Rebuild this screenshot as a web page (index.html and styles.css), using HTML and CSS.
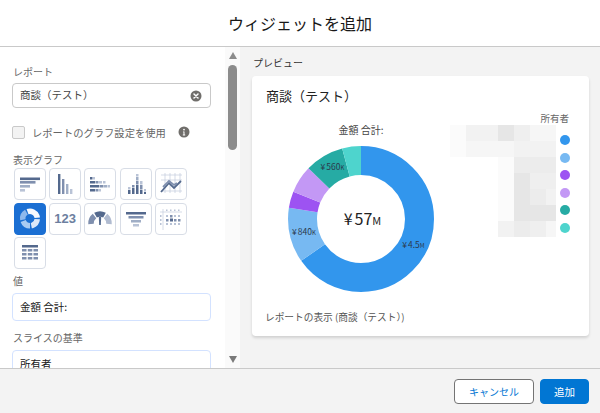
FILE: index.html
```html
<!DOCTYPE html>
<html lang="ja">
<head>
<meta charset="utf-8">
<title>ウィジェットを追加</title>
<link rel="stylesheet" href="styles.css">
</head>
<body>
<div class="modal">
  <header class="head"><h1 class="head-title">ウィジェットを追加</h1></header>
  <main class="body">
    <section class="form-pane">
      <div class="form">
        <div class="field-label first">レポート</div>
        <div class="input input-report">
          <span>商談（テスト）</span>
          <svg class="clear" viewBox="0 0 12 12"><circle cx="6" cy="6" r="5.5" fill="#706e6b"/><path d="M4 4l4 4M8 4l-4 4" stroke="#fff" stroke-width="1.5" stroke-linecap="round"/></svg>
        </div>
        <div class="check-row">
          <span class="checkbox"></span>
          <span class="check-label">レポートのグラフ設定を使用</span>
          <svg class="info" viewBox="0 0 12 12"><circle cx="6" cy="6" r="5.5" fill="#706e6b"/><circle cx="6" cy="3.6" r="0.9" fill="#fff"/><path d="M5 5.4h1.5v3.2h.7v.8H4.8v-.8h.7V6.2H5z" fill="#fff"/></svg>
        </div>
        <div class="field-label graph-label">表示グラフ</div>
        <div class="chart-types">
          <div class="ct"><svg viewBox="0 0 32 32"><rect class="d" x="6" y="9.5" width="20" height="2.6"/><rect class="m" x="6" y="13" width="15.5" height="2.6"/><rect class="n" x="6" y="17" width="10" height="2.6"/><rect class="l" x="6" y="21" width="5" height="2.6"/></svg></div>
          <div class="ct"><svg viewBox="0 0 32 32"><rect class="d" x="9" y="6" width="2.4" height="20"/><rect class="m" x="13" y="11" width="2.4" height="15"/><rect class="n" x="17" y="16" width="2.4" height="10"/><rect class="l" x="21" y="21" width="2.4" height="5"/></svg></div>
          <div class="ct"><svg viewBox="0 0 32 32"><rect class="d" x="6" y="9" width="2.5" height="2.5"/><rect class="l" x="9" y="9" width="2" height="2.5"/><rect class="d" x="6" y="13" width="5" height="2.5"/><rect class="m" x="11.5" y="13" width="3" height="2.5"/><rect class="l" x="15" y="13" width="3" height="2.5"/><rect class="l" x="19" y="13" width="2.5" height="2.5"/><rect class="d" x="6" y="17" width="9" height="2.5"/><rect class="m" x="15.5" y="17" width="4" height="2.5"/><rect class="n" x="20" y="17" width="3" height="2.5"/><rect class="l" x="23.5" y="17" width="2.5" height="2.5"/><rect class="d" x="6" y="21" width="5" height="2.5"/><rect class="m" x="11.5" y="21" width="3" height="2.5"/><rect class="l" x="15" y="21" width="2" height="2.5"/></svg></div>
          <div class="ct"><svg viewBox="0 0 32 32"><rect class="d" x="8" y="22" width="2.5" height="4"/><rect class="l" x="8" y="19" width="2.5" height="2.5"/><rect class="d" x="12" y="20" width="2.5" height="6"/><rect class="m" x="12" y="17" width="2.5" height="2.5"/><rect class="d" x="16" y="17" width="2.5" height="9"/><rect class="m" x="16" y="13" width="2.5" height="3.5"/><rect class="n" x="16" y="9" width="2.5" height="3.5"/><rect class="l" x="16" y="6" width="2.5" height="2.5"/><rect class="d" x="20" y="22" width="2.5" height="4"/><rect class="m" x="20" y="17" width="2.5" height="4.5"/><rect class="l" x="20" y="13" width="2.5" height="3.5"/><rect class="d" x="24" y="24" width="2" height="2"/><rect class="l" x="24" y="21" width="2" height="2.5"/></svg></div>
          <div class="ct"><svg viewBox="0 0 32 32"><path class="grid" d="M6 7h21M6 12h21M6 23h21M10 5v20M15 5v20M20 5v20M25 5v20"/><path class="line" d="M6 24l8-9 5 5 7-7"/><path class="line2" d="M8 19l6-6 5 4 3-2"/></svg></div>
          <div class="ct ct-on"><svg viewBox="0 0 32 32"><g class="donut" transform="rotate(-110 16 15.5)"><circle stroke="#f6f9fe" cx="16" cy="15.5" r="7.250" pathLength="360" stroke-dasharray="105 360"/><circle stroke="#dbe8f9" cx="16" cy="15.5" r="7.250" pathLength="360" stroke-dasharray="75 360" stroke-dashoffset="-115"/><circle stroke="#a9cbf2" cx="16" cy="15.5" r="7.250" pathLength="360" stroke-dasharray="70 360" stroke-dashoffset="-200"/><circle stroke="#8fb9ec" cx="16" cy="15.5" r="7.250" pathLength="360" stroke-dasharray="70 360" stroke-dashoffset="-280"/></g></svg></div>
          <div class="ct ct-num">123</div>
          <div class="ct"><svg viewBox="0 0 32 32"><g fill="none" stroke-width="5.500"><path class="sm" d="M7 21a9.500 9.500 0 0 1 3.500-8"/><path class="sd" d="M11.500 12.200a9.500 9.500 0 0 1 9 0"/><path class="sl" d="M21.500 13a9.500 9.500 0 0 1 3.500 8"/></g><path class="d" d="M14.800 14h2.400l-.4 8h-1.600z"/></svg></div>
          <div class="ct"><svg viewBox="0 0 32 32"><rect class="d" x="6" y="9" width="20" height="2.5"/><rect class="m" x="8.500" y="13" width="15" height="2.500"/><rect class="n" x="11" y="17" width="10" height="2.500"/><rect class="l" x="13" y="21" width="6" height="2.500"/></svg></div>
          <div class="ct"><svg viewBox="0 0 32 32"><path class="grid" d="M8 6v21M5 9h22"/><g class="l"><rect x="11" y="6.500" width="1.500" height="1.500"/><rect x="15" y="6.500" width="1.500" height="1.500"/><rect x="19" y="6.500" width="1.500" height="1.500"/><rect x="23" y="6.500" width="1.500" height="1.500"/><rect x="11" y="12" width="2" height="2"/><rect x="19" y="12" width="2" height="2"/><rect x="23" y="12" width="2" height="2"/><rect x="11" y="20" width="2" height="2"/><rect x="15" y="20" width="2" height="2"/><rect x="19" y="20" width="2" height="2"/><rect x="23" y="20" width="2" height="2"/><rect x="5" y="12" width="1.500" height="2"/><rect x="5" y="16" width="1.500" height="2"/><rect x="5" y="20" width="1.500" height="2"/></g><g class="m"><rect x="15" y="12" width="2.500" height="2.500"/><rect x="11" y="16" width="2.500" height="2.500"/><rect x="19" y="16" width="2.500" height="2.500"/><rect x="23" y="16" width="2.500" height="2.500"/></g><rect class="d" x="15" y="15.500" width="3" height="3"/></svg></div>
          <div class="ct"><svg viewBox="0 0 32 32"><rect class="d" x="8" y="8" width="16" height="2.500"/><g class="m"><rect x="8" y="12" width="4.500" height="2.500"/><rect x="13.800" y="12" width="4.500" height="2.500"/><rect x="19.500" y="12" width="4.500" height="2.500"/><rect x="8" y="16" width="4.500" height="2.500"/><rect x="13.800" y="16" width="4.500" height="2.500"/><rect x="19.500" y="16" width="4.500" height="2.500"/><rect x="8" y="20" width="4.500" height="2.500"/><rect x="13.800" y="20" width="4.500" height="2.500"/><rect x="19.500" y="20" width="4.500" height="2.500"/></g></svg></div>
        </div>
        <div class="field-label value-label">値</div>
        <div class="input input-soft"><span class="nudge">金額 合計:</span></div>
        <div class="field-label slice-label">スライスの基準</div>
        <div class="input input-soft input-clipped"><span class="nudge">所有者</span></div>
      </div>
      <div class="scrollbar">
        <span class="arrow arrow-up"></span>
        <span class="thumb"></span>
        <span class="arrow arrow-down"></span>
      </div>
    </section>
    <section class="preview-pane">
      <div class="preview-label">プレビュー</div>
      <article class="card">
        <h2 class="card-title">商談（テスト）</h2>
        <div class="chart-row">
          <div class="pie-col">
            <div class="pie-title">金額 合計:</div>
            <svg class="pie" viewBox="0 0 150 150">
              <g class="rings" transform="rotate(-90 75 75)">
                <circle class="s1" cx="75" cy="75" r="58.500" pathLength="360" stroke-dasharray="235 360"/>
                <circle class="s2" cx="75" cy="75" r="58.500" pathLength="360" stroke-dasharray="44 360" stroke-dashoffset="-235"/>
                <circle class="s3" cx="75" cy="75" r="58.500" pathLength="360" stroke-dasharray="13 360" stroke-dashoffset="-279"/>
                <circle class="s4" cx="75" cy="75" r="58.500" pathLength="360" stroke-dasharray="22 360" stroke-dashoffset="-292"/>
                <circle class="s5" cx="75" cy="75" r="58.500" pathLength="360" stroke-dasharray="31 360" stroke-dashoffset="-314"/>
                <circle class="s6" cx="75" cy="75" r="58.500" pathLength="360" stroke-dasharray="15 360" stroke-dashoffset="-345"/>
              </g>
              <text class="pie-val" x="18" y="91" text-anchor="middle">¥<tspan dx="1">840</tspan><tspan class="u">K</tspan></text>
              <text class="pie-val" x="127.500" y="104" text-anchor="middle">¥<tspan dx="1">4.5</tspan><tspan class="u">M</tspan></text>
              <text class="pie-val" x="46.500" y="26" text-anchor="middle">¥<tspan dx="1">560</tspan><tspan class="u">K</tspan></text>
              <text class="pie-total" x="76.500" y="81" text-anchor="middle">¥<tspan dx="2">57</tspan><tspan class="pie-total-u">M</tspan></text>
            </svg>
          </div>
          <div class="legend">
            <div class="legend-title">所有者</div>
            <div class="legend-body">
              <div class="mosaic">
                <i class="a"></i><i class="c"></i><i class="c"></i><i class="f"></i><i class="h"></i><i class="b"></i><i class="b"></i>
                <i class="a"></i><i class="b"></i><i class="b"></i><i class="b"></i><i class="c"></i><i class="c"></i><i class="c"></i>
                <i></i><i></i><i></i><i class="a"></i><i class="e"></i><i class="e"></i><i class="e"></i>
                <i></i><i></i><i></i><i class="a"></i><i class="f"></i><i class="h"></i><i class="h"></i>
                <i></i><i></i><i></i><i class="a"></i><i class="f"></i><i class="e"></i><i class="c"></i>
                <i></i><i></i><i></i><i class="a"></i><i class="f"></i><i class="f"></i><i class="f"></i>
                <i></i><i></i><i></i><i class="c"></i><i class="e"></i><i class="h"></i><i class="b"></i>
              </div>
              <div class="dots">
                <span class="dot d1"></span><span class="dot d2"></span><span class="dot d3"></span><span class="dot d4"></span><span class="dot d5"></span><span class="dot d6"></span>
              </div>
            </div>
          </div>
        </div>
        <div class="card-link">レポートの表示 (商談（テスト）)</div>
      </article>
    </section>
  </main>
  <footer class="foot">
    <button class="btn btn-cancel">キャンセル</button>
    <button class="btn btn-add">追加</button>
  </footer>
</div>
</body>
</html>
```
FILE: styles.css
```css
* { box-sizing: border-box; }
html, body { margin: 0; height: 100%; }
body {
  font-family: "Noto Sans CJK JP", "Liberation Sans", sans-serif;
  color: #181818;
  background: #fff;
  overflow: hidden;
}
.modal { width: 600px; height: 413px; display: flex; flex-direction: column; }
.head {
  height: 47px;
  border-bottom: 1px solid #c9c9c9;
  display: flex;
  align-items: center;
  justify-content: center;
}
.head-title { margin: 0; font-size: 16px; font-weight: 400; line-height: 20px; }
.body { flex: 1; min-height: 0; display: flex; }
.form-pane { width: 240px; display: flex; background: #fff; overflow: hidden; }
.form { width: 225px; padding: 0 14px 0 12px; overflow: hidden; flex: none; }
.field-label { font-size: 10px; line-height: 14px; color: #666; padding-left: 1px; }
.first { margin-top: 18px; }
.input {
  height: 25px;
  border: 1px solid #c9c9c9;
  border-radius: 4px;
  margin-top: 3px;
  padding: 0 7px;
  display: flex;
  align-items: center;
  font-size: 10.500px;
  color: #444;
}
.input-report { justify-content: space-between; margin-top: 4px; padding-right: 8px; }
.input-report span { margin-bottom: 2px; }
.nudge { margin-bottom: 1px; }
.clear, .info { width: 12px; height: 12px; display: block; flex: none; }
.check-row { display: flex; align-items: center; margin-top: 17px; height: 14px; }
.checkbox { width: 13px; height: 13px; background: #f3f3f3; border: 1px solid #c9c9c9; border-radius: 2px; }
.check-label { font-size: 10.300px; margin-left: 7px; color: #666; }
.info { margin-left: 12px; }
.graph-label { margin-top: 14px; }
.chart-types {
  display: grid;
  grid-template-columns: repeat(5, 32px);
  column-gap: 3.200px;
  row-gap: 2.500px;
  margin: 1px 0 0 2px;
}
.ct {
  width: 32px;
  height: 32px;
  border: 1px solid #d8dde6;
  border-radius: 4px;
  background: #fff;
  position: relative;
  display: flex;
  align-items: center;
  justify-content: center;
}
.ct svg { position: absolute; left: -1px; top: -1px; width: 32px; height: 32px; display: block; }
.ct-on { background: #1b6fd3; border-color: #1b6fd3; }
.donut circle { fill: none; stroke-width: 5.500; }
.ct-num { font-family: "Liberation Sans", sans-serif; font-size: 13px; font-weight: 700; color: #6d7f9f; }
.d { fill: #54698d; }
.m { fill: #7f8fae; }
.n { fill: #a0aec6; }
.l { fill: #b9c3d6; }
.sd { stroke: #54698d; }
.sm { stroke: #7f8fae; }
.sl { stroke: #b0bbd0; }
.grid { stroke: #c3ccdc; stroke-width: 0.7; fill: none; }
.line { stroke: #54698d; stroke-width: 1.8; fill: none; }
.line2 { stroke: #7f8fae; stroke-width: 1.8; fill: none; }
.value-label { margin-top: 5px; }
.input-soft { height: 28px; border-color: #d3e2ff; color: #181818; margin-top: 5px; }
.input-clipped { height: 40px; padding-bottom: 12px; }
.slice-label { margin-top: 10px; }
.scrollbar { width: 15px; background: #fafafa; display: flex; flex-direction: column; align-items: center; position: relative; }
.arrow { width: 0; height: 0; border-left: 4.500px solid transparent; border-right: 4.500px solid transparent; }
.arrow-up { border-bottom: 7px solid #8c8c8c; margin-top: 5px; }
.thumb { width: 9px; height: 85px; border-radius: 5px; background: #8c8c8c; margin-top: 6px; }
.arrow-down { border-top: 7px solid #7a7a7a; margin-top: auto; margin-bottom: 5px; }
.preview-pane { flex: 1; min-width: 0; background: #f3f3f3; padding: 9px 11px 0 12px; }
.preview-label { font-size: 10px; line-height: 14px; color: #333; margin-left: 1px; }
.card {
  margin-top: 6px;
  height: 260px;
  background: #fff;
  border-radius: 4px;
  box-shadow: 0 2px 3px rgba(0,0,0,.14);
  padding: 10px 0 0 13px;
  display: flex;
  flex-direction: column;
}
.card-title { margin: 0; padding-left: 1px; font-size: 13px; font-weight: 400; line-height: 20px; color: #222; }
.chart-row { display: flex; height: 203px; }
.pie-col { width: 192px; display: flex; flex-direction: column; align-items: center; padding-top: 17px; flex: none; }
.pie-title { font-size: 10px; line-height: 14px; color: #444; }
.pie { width: 150px; height: 150px; margin-top: 7px; display: block; flex: none; }
.rings circle { fill: none; stroke-width: 29; }
.s1 { stroke: #3296ed; }
.s2 { stroke: #77b9f2; }
.s3 { stroke: #9d53f2; }
.s4 { stroke: #c398f5; }
.s5 { stroke: #26aba4; }
.s6 { stroke: #4ed4cd; }
.pie-val { font-size: 8.500px; fill: #2b3a4d; }
.u { font-size: 6px; }
.pie-total { font-size: 16px; fill: #222; }
.pie-total-u { font-size: 11px; }
.legend { width: 122px; margin-left: -7px; flex: none; padding-top: 5px; }
.legend-title { font-size: 9.500px; line-height: 14px; color: #666; text-align: right; width: 119px; }
.legend-body { display: flex; }
.mosaic { display: grid; grid-template-columns: repeat(6, 16px) 10px; grid-auto-rows: 16px; flex: none; }
.a { background: #fbfbfb; }
.b { background: #f6f6f6; }
.c { background: #f2f2f2; }
.h { background: #efefef; }
.e { background: #ececec; }
.f { background: #e6e6e6; }
.dots { display: flex; flex-direction: column; gap: 7.600px; margin: 10px 0 0 4px; }
.dot { width: 10px; height: 10px; border-radius: 50%; display: block; }
.d1 { background: #3296ed; }
.d2 { background: #77b9f2; }
.d3 { background: #9d53f2; }
.d4 { background: #c398f5; }
.d5 { background: #26aba4; }
.d6 { background: #4ed4cd; }
.card-link { font-size: 9.700px; line-height: 14px; color: #555; margin-top: 1px; }
.foot {
  height: 45px;
  background: #f3f3f3;
  border-top: 1px solid #c9c9c9;
  display: flex;
  justify-content: flex-end;
  align-items: center;
  gap: 6px;
  padding-right: 11px;
}
.btn { height: 25px; border-radius: 4px; font: inherit; font-size: 10px; padding: 0; }
.btn-cancel { width: 80px; background: #fff; border: 1px solid #747474; color: #0176d3; }
.btn-add { width: 49px; background: #0176d3; border: 1px solid #0176d3; color: #fff; font-size: 10.500px; }
```
